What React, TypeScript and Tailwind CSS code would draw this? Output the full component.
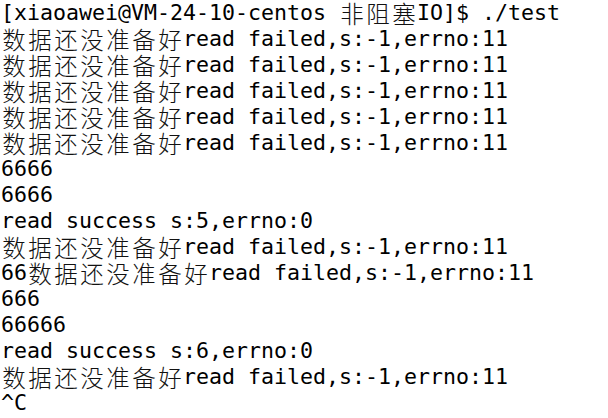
import React from 'react';

const cjk = /[\u4e00-\u9fff]/;

// each CJK glyph takes two terminal cells
const Line: React.FC<{ text: string }> = ({ text }) => {
  const parts: React.ReactNode[] = [];
  let buf = '';
  Array.from(text).forEach((ch, i) => {
    if (cjk.test(ch)) {
      if (buf) {
        parts.push(buf);
        buf = '';
      }
      parts.push(
        <span
          key={i}
          className="inline-block h-[26px] w-[26px] overflow-visible text-center align-top text-[23.5px] font-light leading-[26px] text-[#111] [font-family:'Noto_Sans_CJK_SC',sans-serif]"
        >
          {ch}
        </span>
      );
    } else {
      buf += ch;
    }
  });
  if (buf) parts.push(buf);
  return <div className="h-[26px] whitespace-pre leading-[26px]">{parts}</div>;
};

const lines = [
  '[xiaoawei@VM-24-10-centos 非阻塞IO]$ ./test',
  '数据还没准备好read failed,s:-1,errno:11',
  '数据还没准备好read failed,s:-1,errno:11',
  '数据还没准备好read failed,s:-1,errno:11',
  '数据还没准备好read failed,s:-1,errno:11',
  '数据还没准备好read failed,s:-1,errno:11',
  '6666',
  '6666',
  'read success s:5,errno:0',
  '数据还没准备好read failed,s:-1,errno:11',
  '66数据还没准备好read failed,s:-1,errno:11',
  '666',
  '66666',
  'read success s:6,errno:0',
  '数据还没准备好read failed,s:-1,errno:11',
  '^C',
];

export default function App() {
  return (
    <div className="h-[418px] w-[608px] overflow-hidden bg-white pl-[1px] text-[21.6px] text-black [font-family:'DejaVu_Sans_Mono',monospace]">
      {lines.map((l, i) => (
        <Line key={i} text={l} />
      ))}
      <div className="h-[26px] pl-[480px] pt-[14px]">
        <div className="h-[2px] w-[13px] bg-[#00ff00]" />
      </div>
    </div>
  );
}
